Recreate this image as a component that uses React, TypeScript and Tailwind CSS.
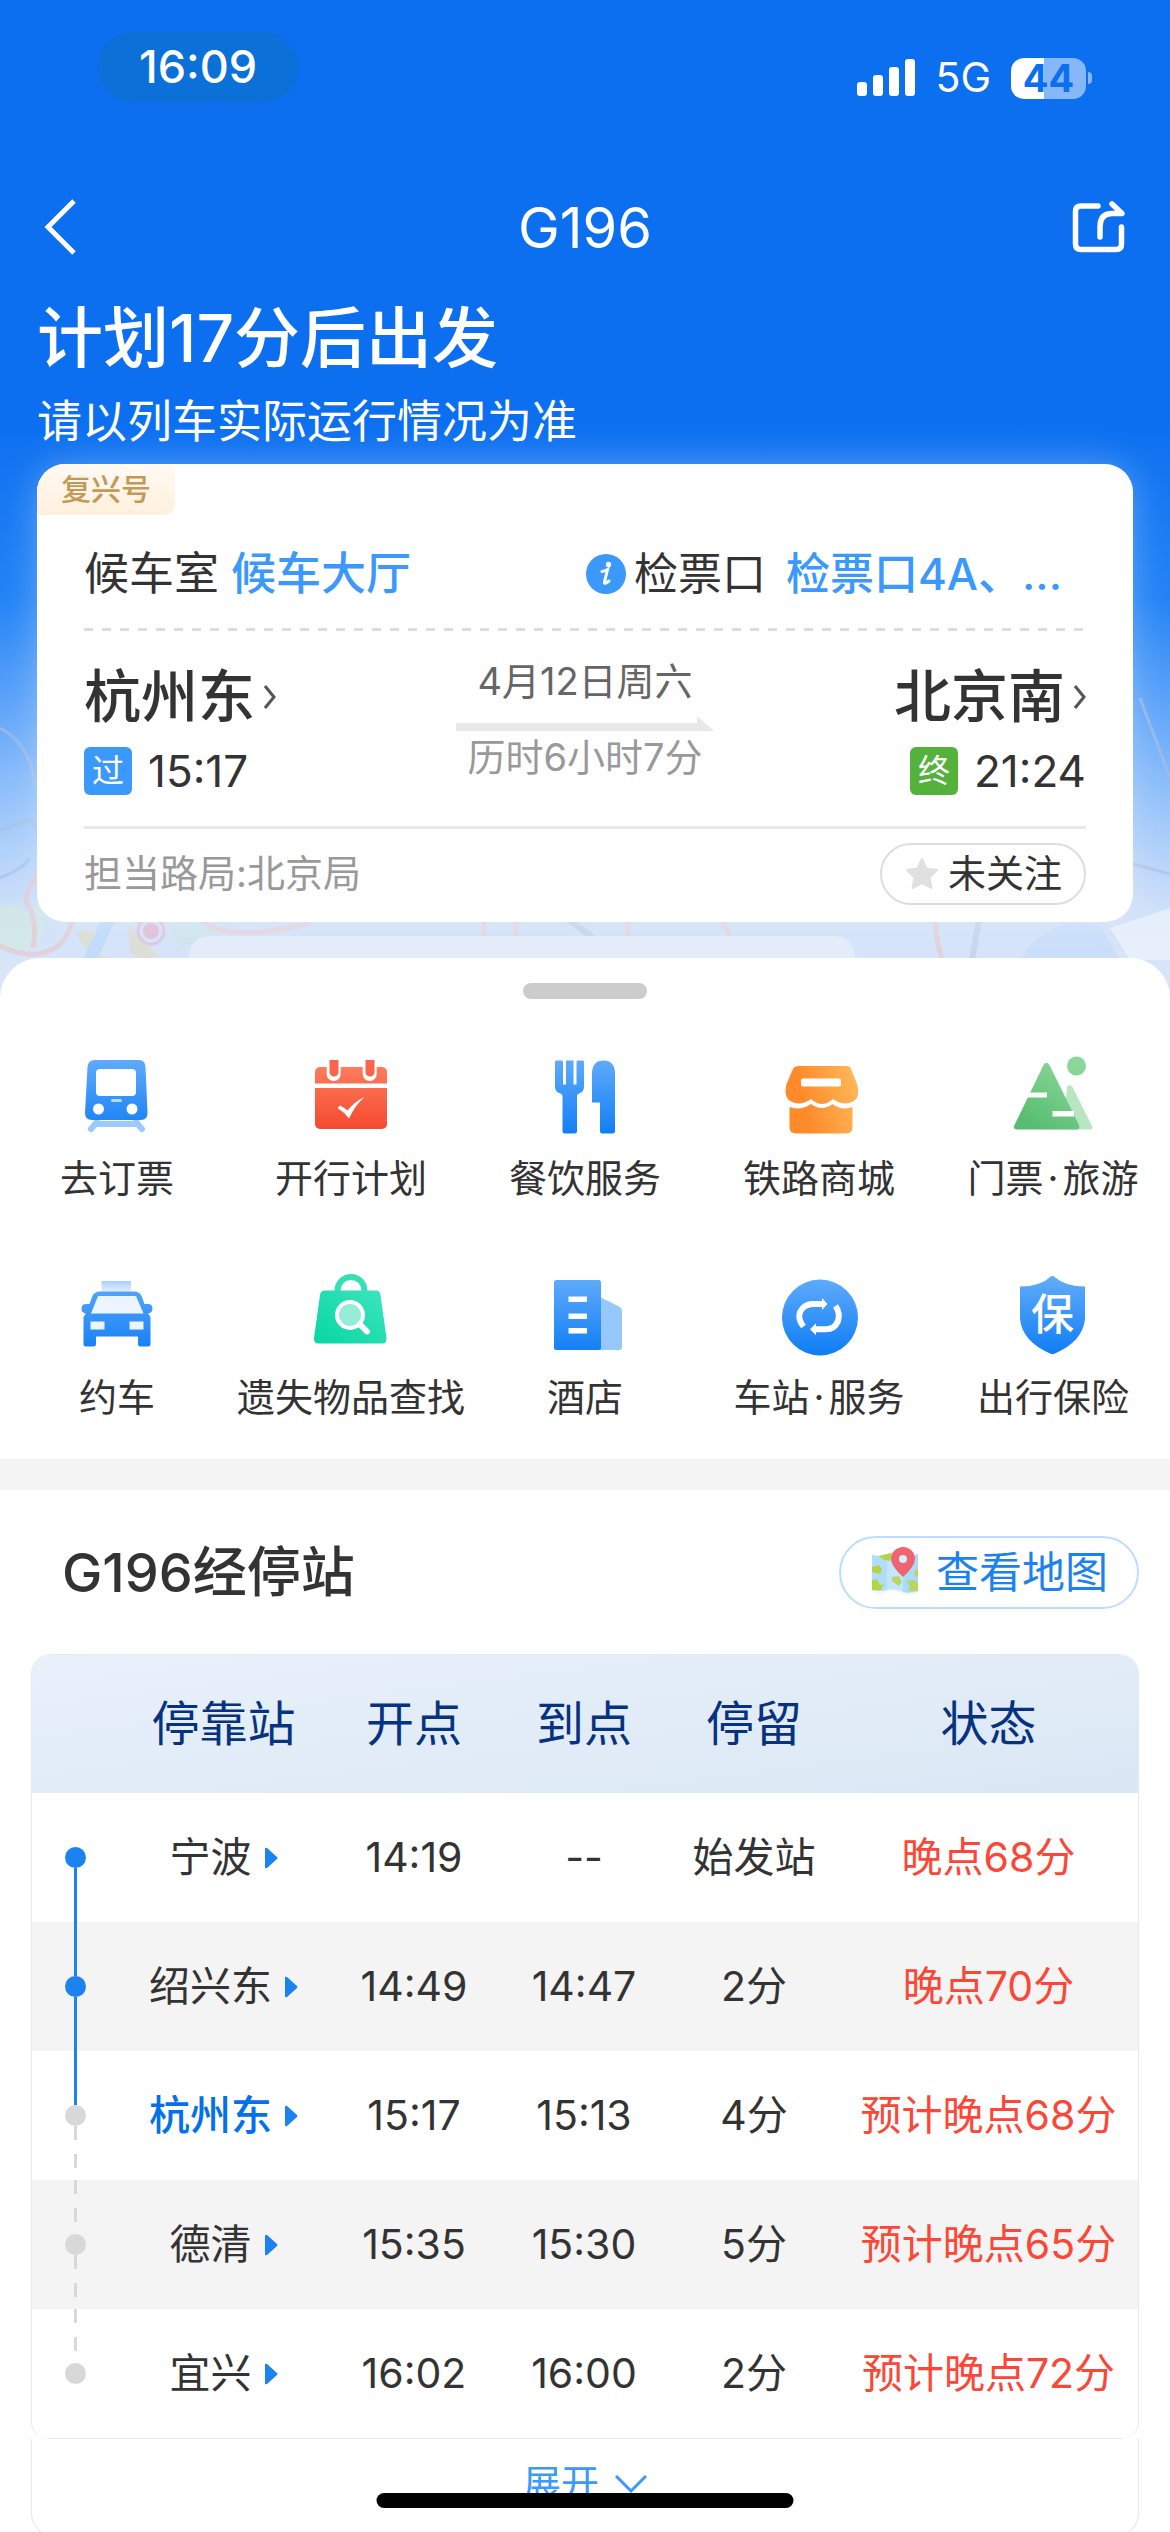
import type { ReactNode } from 'react'

const stops = [
  { name: '宁波', depart: '14:19', arrive: '--', stay: '始发站', status: '晚点68分', passed: true },
  { name: '绍兴东', depart: '14:49', arrive: '14:47', stay: '2分', status: '晚点70分', passed: true },
  { name: '杭州东', depart: '15:17', arrive: '15:13', stay: '4分', status: '预计晚点68分', passed: false, current: true },
  { name: '德清', depart: '15:35', arrive: '15:30', stay: '5分', status: '预计晚点65分', passed: false },
  { name: '宜兴', depart: '16:02', arrive: '16:00', stay: '2分', status: '预计晚点72分', passed: false },
]

const dashed = 'bg-[repeating-linear-gradient(180deg,#d8d8d8_0px_14px,transparent_14px_28px)]'

function Gradients() {
  return (
    <svg className="absolute size-0" aria-hidden="true">
      <defs>
        <linearGradient id="blue" x1="0" y1="0" x2="0" y2="80" gradientUnits="userSpaceOnUse">
          <stop offset="0" stopColor="#63adfb" />
          <stop offset="1" stopColor="#0f7df5" />
        </linearGradient>
        <linearGradient id="red" x1="0" y1="0" x2="0" y2="80" gradientUnits="userSpaceOnUse">
          <stop offset="0" stopColor="#ff8564" />
          <stop offset="1" stopColor="#f4442a" />
        </linearGradient>
        <linearGradient id="orange" x1="10" y1="50" x2="78" y2="34" gradientUnits="userSpaceOnUse">
          <stop offset="0.2" stopColor="#ff8a2a" />
          <stop offset="1" stopColor="#ffb657" />
        </linearGradient>
        <linearGradient id="green" x1="20" y1="70" x2="60" y2="10" gradientUnits="userSpaceOnUse">
          <stop offset="0" stopColor="#57bd70" />
          <stop offset="1" stopColor="#8ad79a" />
        </linearGradient>
        <linearGradient id="teal" x1="16" y1="68" x2="62" y2="10" gradientUnits="userSpaceOnUse">
          <stop offset="0" stopColor="#0bd8a5" />
          <stop offset="1" stopColor="#3ce3bd" />
        </linearGradient>
        <linearGradient id="lamp" x1="0" y1="6" x2="0" y2="17" gradientUnits="userSpaceOnUse">
          <stop offset="0" stopColor="#a9cffd" />
          <stop offset="1" stopColor="#e4f0fe" />
        </linearGradient>
      </defs>
    </svg>
  )
}

function Icon({ children }: { children: ReactNode }) {
  return (
    <svg viewBox="0 0 80 80" className="size-20 overflow-visible" aria-hidden="true">
      {children}
    </svg>
  )
}

const services: { label: string; icon: ReactNode }[] = [
  {
    label: '去订票',
    icon: (
      <Icon>
        <path d="M18 68H61M20 66L14 73M59 66L65 73" stroke="#9ccafc" strokeWidth="6" strokeLinecap="round" fill="none" />
        <path d="M18 4H62Q68 4 68.500 11L70.500 57Q70.500 64 64 64H15Q8 64 8 57L10.500 11Q11 4 18 4Z" fill="url(#blue)" />
        <rect x="19" y="13" width="40" height="27" rx="4" fill="#fff" />
        <rect x="34" y="43" width="11" height="3" rx="1.500" fill="#b9dafd" />
        <circle cx="21.500" cy="53" r="5.500" fill="#fff" />
        <circle cx="55" cy="53" r="5.500" fill="#fff" />
      </Icon>
    ),
  },
  {
    label: '开行计划',
    icon: (
      <Icon>
        <rect x="4" y="11" width="72" height="62" rx="5" fill="url(#red)" />
        <path d="M22.700 4V18M58.700 4V18" stroke="#fff" strokeWidth="14" strokeLinecap="round" />
        <path d="M15 0H31V10.500H15ZM51 0H67V10.500H51Z" fill="#fff" />
        <path d="M18.500 4H27.500V16A4.500 4.500 0 0 1 18.500 16ZM54.500 4H63.500V16A4.500 4.500 0 0 1 54.500 16Z" fill="#f9654a" />
        <rect x="2" y="27.500" width="76" height="4.500" fill="#fff" />
        <path d="M26.500 52L29 49.500Q33 51.500 36.500 54.500Q43 46 53.500 41Q43.500 50 38 62.500Q33 56 26.500 52Z" fill="#fff" />
      </Icon>
    ),
  },
  {
    label: '餐饮服务',
    icon: (
      <Icon>
        <path
          d="M11 4.500H17Q18 4.500 18 6V28.500H21V4.500H28.500V28.500H31.500V6Q31.500 4.500 33 4.500H38Q39 4.500 39 6V31Q39 36 34 37.500Q32 38 32 40V75Q32 77.500 29.500 77.500H20Q17.500 77.500 17.500 75V40Q17.500 38 15.500 37.500Q10 36 10 31V6Q10 4.500 11 4.500Z"
          fill="url(#blue)"
        />
        <path d="M47 16Q48 4.500 58.500 4.500Q69 4.500 70 16V75Q70 77.500 67.500 77.500H57.500Q55 77.500 55 75V46.500H47Z" fill="url(#blue)" />
      </Icon>
    ),
  },
  {
    label: '铁路商城',
    icon: (
      <Icon>
        <path
          d="M20 10H68Q71 10 72 13L78 28Q82 42 73 46Q64 50 54 43Q43 53 32 43Q22 50 13 46Q4 42 7.500 28L14 13Q15 10 20 10Z"
          fill="url(#orange)"
        />
        <path d="M10.500 51Q22 55 32 48Q43 56 53.500 48Q63 55 73.500 51V71Q73.500 77.500 67 77.500H17Q10.500 77.500 10.500 71Z" fill="url(#orange)" />
        <rect x="22" y="22.500" width="40" height="8" rx="2" fill="#fff" />
      </Icon>
    ),
  },
  {
    label: '门票·旅游',
    icon: (
      <Icon>
        <path d="M54 31Q57.500 27 60 32L79 70Q80.500 73.500 76.500 73.500H50Z" fill="#bae5c2" />
        <path d="M30.500 9Q33.500 4.500 36.500 9L66 69Q67.500 73.500 63 73.500H4Q-0.500 73.500 1.500 69Z" fill="url(#green)" />
        <circle cx="63.500" cy="10" r="9.500" fill="url(#green)" />
        <path d="M12 36.500H34V41.500H12ZM39.500 55H61V60.500H39.500Z" fill="#fff" />
      </Icon>
    ),
  },
  {
    label: '约车',
    icon: (
      <Icon>
        <rect x="24.500" y="6" width="29.500" height="11" fill="url(#lamp)" />
        <path
          d="M23 16.500H57Q63 16.500 65 22L67.500 29H71Q75.500 29 75.500 33.500Q75.500 38 71 38.500L73.500 42V69Q73.500 71.500 71 71.500H63.500Q61 71.500 61 69V61.500H19V69Q19 71.500 16.500 71.500H9Q6.500 71.500 6.500 69V42L9 38.500Q4.500 38 4.500 33.500Q4.500 29 9 29H12.500L15 22Q17 16.500 23 16.500Z"
          fill="url(#blue)"
        />
        <path d="M21 21H59L66.500 38.500H14Z" fill="#ebf4ff" />
        <path d="M13.500 46.500H27.500V54.500H13.500ZM52.500 46.500H66.500V54.500H52.500Z" fill="#ebf4ff" />
      </Icon>
    ),
  },
  {
    label: '遗失物品查找',
    icon: (
      <Icon>
        <path d="M26.500 18V15.500A13.500 13.500 0 0 1 53.500 15.500V18" stroke="#35e0b7" strokeWidth="6" fill="none" />
        <path d="M14 15.500H65Q69 15.500 69.500 20L75.500 63Q76 68.500 71 68.500H7.500Q2.500 68.500 3 63L9 20Q9.500 15.500 14 15.500Z" fill="url(#teal)" />
        <circle cx="39" cy="40" r="13" fill="#97ecd8" stroke="#fff" strokeWidth="4" />
        <path d="M49 49.500L56 56.500" stroke="#fff" strokeWidth="6" strokeLinecap="round" />
      </Icon>
    ),
  },
  {
    label: '酒店',
    icon: (
      <Icon>
        <path d="M55 22L75 32Q77 33 77 35.500V72Q77 75 74 75H55Z" fill="#97c8fb" />
        <rect x="9" y="5" width="47" height="70" rx="2.500" fill="url(#blue)" />
        <path d="M23.500 21.500H42V27H23.500ZM23.500 38.500H42V44H23.500ZM23.500 53H42V58.500H23.500Z" fill="#fff" />
      </Icon>
    ),
  },
  {
    label: '车站·服务',
    icon: (
      <Icon>
        <circle cx="41" cy="42.500" r="38" fill="url(#blue)" />
        <path d="M24.500 51.500Q18.500 44 21 37Q25 29 34 29H43" stroke="#fff" strokeWidth="6" fill="none" />
        <path d="M56.500 31Q61.500 38 59 46Q55.500 54.300 47 54.300H37" stroke="#fff" strokeWidth="6" fill="none" />
        <path d="M43 23L48.500 29L43 35ZM37 48.300L31 54.300L37 60.300Z" fill="#fff" />
      </Icon>
    ),
  },
  {
    label: '出行保险',
    icon: (
      <Icon>
        <path d="M38 1.500Q39.500 0 41 1.500Q52 11.500 72 11.500V44Q70 66 42 78.500Q39.500 79.500 37 78.500Q9 66 7 44V11.500Q27 11.500 38 1.500Z" fill="url(#blue)" />
        <text x="39.500" y="55" textAnchor="middle" fontSize="43" fontWeight="500" fill="#fff">
          保
        </text>
      </Icon>
    ),
  },
]

function StatusBar() {
  return (
    <div className="flex h-[134px] items-start justify-between pt-8 pr-[78px] pl-[98px]">
      <span className="flex h-[70px] w-[200px] items-center justify-center rounded-full bg-[#0b70d7] text-[45px] font-medium">
        16:09
      </span>
      <div className="flex h-[92px] items-center gap-5">
        <svg viewBox="0 0 58 38" className="h-[38px] w-[58px]" aria-hidden="true">
          <rect x="0" y="23" width="10" height="14" rx="3" fill="#fff" />
          <rect x="16" y="16" width="10" height="21" rx="3" fill="#fff" />
          <rect x="32" y="8" width="10" height="29" rx="3" fill="#fff" />
          <rect x="48" y="0" width="10" height="37" rx="3" fill="#fff" />
        </svg>
        <span className="text-[41px]">5G</span>
        <span className="flex items-center gap-[2px]">
          <span className="flex h-[41px] w-[75px] items-center justify-center rounded-[13px] bg-linear-to-r from-white from-44% to-[#86b7f8] to-44% text-[38px] leading-none font-bold text-[#0c6ff0]">
            44
          </span>
          <span className="h-3 w-1 rounded-r-full bg-[#86b7f8]" />
        </span>
      </div>
    </div>
  )
}

function NavBar() {
  return (
    <div className="flex h-[186px] items-start justify-between px-11 pt-[60px]">
      <button aria-label="返回" className="h-[66px] w-[54px]">
        <svg viewBox="0 0 54 66" className="h-full w-full" fill="none" stroke="#fff" strokeWidth="5">
          <path d="M30 7L4 33L30 59" />
        </svg>
      </button>
      <h1 className="text-[56px] leading-[68px]">G196</h1>
      <button aria-label="分享" className="h-[66px] w-[54px]">
        <svg
          viewBox="0 0 54 66"
          className="h-full w-full"
          fill="none"
          stroke="#fff"
          strokeWidth="5.500"
          strokeLinecap="round"
          strokeLinejoin="round"
        >
          <path d="M26 12H9Q3.500 12 3.500 17.500V50Q3.500 55.500 9 55.500H44Q49.500 55.500 49.500 50V33" />
          <path d="M28 43V33Q28 19.500 40 19.500H50L40 10" />
        </svg>
      </button>
    </div>
  )
}

// faint street map that shows through under the blue header
function MapBackdrop() {
  return (
    <svg
      viewBox="0 0 1170 300"
      preserveAspectRatio="xMidYMax slice"
      className="absolute inset-x-0 bottom-0 h-[300px] w-full opacity-60"
      fill="none"
      aria-hidden="true"
    >
      <path d="M0 212Q14 200 26 214L40 204L46 226L36 250L0 254Z" fill="#d3ecdd" />
      <path d="M165 215L220 210L216 236L180 250Z" fill="#cfe6e6" />
      <path d="M76 234L92 232L106 242L100 256L114 262H96L84 248ZM128 226L140 240L160 258L142 262L130 254Z" fill="#e2dcc0" />
      <path d="M90 262L112 214" stroke="#b6d6fc" strokeWidth="13" />
      <path d="M0 30Q30 45 36 90M0 132L30 122L60 150M0 180Q24 170 30 160" stroke="#a9bfe4" strokeWidth="3" />
      <path d="M0 248Q30 262 50 252Q66 248 74 218M33 250Q38 220 27 206Q22 186 60 160" stroke="#eac6cb" strokeWidth="5" />
      <path d="M190 210Q215 250 310 225M484 215V240M516 215V240M628 215V240M715 210L730 238" stroke="#eccdd2" strokeWidth="5" />
      <path d="M560 215L600 245M980 215L972 262" stroke="#c3cce6" strokeWidth="6" />
      <path d="M935 215Q935 240 942 262" stroke="#eac8c4" strokeWidth="5" />
      <path d="M1020 262Q1050 215 1100 228L1120 262Z" fill="#c4dbfb" />
      <path d="M1110 230L1170 210V262H1130Z" fill="#f3f7fd" />
      <path d="M1140 0L1170 80M1130 165L1170 176" stroke="#a9bfe4" strokeWidth="3" />
      <circle cx="151" cy="233" r="13" stroke="#e8b4cb" strokeWidth="3" />
      <circle cx="151" cy="233" r="8" fill="#e6a9c3" />
    </svg>
  )
}

function StationArrow() {
  return (
    <svg viewBox="0 0 12 24" className="h-6 w-3" fill="none" stroke="#555" strokeWidth="3" aria-hidden="true">
      <path d="M1 1L10 12L1 23" />
    </svg>
  )
}

function TripCard() {
  return (
    <section className="mx-[37px] rounded-[28px] bg-white px-[47px] text-[#333] shadow-[0_0_36px_rgba(255,255,255,0.3)]">
      <div className="-ml-[47px] flex h-[51px] w-[138px] items-center justify-center rounded-tl-[28px] rounded-br-[10px] bg-linear-to-b from-[#fffaf5] to-[#fff0dc] text-[30px] font-medium text-[#c39a55]">
        复兴号
      </div>
      <div className="flex h-[113px] items-center justify-between pt-1 text-[45px]">
        <p>
          候车室
          <button className="ml-3 font-medium text-[#3b99fc]">候车大厅</button>
        </p>
        <p className="flex items-center pr-6 text-[44px]">
          <svg viewBox="0 0 40 40" className="mr-2 size-10" aria-hidden="true">
            <circle cx="20" cy="20" r="20" fill="#3b99fc" />
            <circle cx="22.500" cy="10.500" r="2.700" fill="#fff" />
            <path d="M16 17.500Q19 17 21.500 15.500L18.500 28Q18 31 23 27" stroke="#fff" strokeWidth="3" fill="none" strokeLinecap="round" />
          </svg>
          检票口
          <button className="ml-5 font-medium text-[#3b99fc]">检票口4A、...</button>
        </p>
      </div>
      <div className="h-[3px] bg-[repeating-linear-gradient(90deg,#ddd_0px_9px,transparent_9px_18px)]" />
      <div className="flex h-[195px] items-start justify-between">
        <div className="pt-6">
          <button className="flex items-center gap-[9px] text-[57px] leading-[84px] font-medium">
            杭州东
            <StationArrow />
          </button>
          <p className="mt-2 flex h-12 items-center gap-4 text-[44px]">
            <span className="flex size-12 items-center justify-center rounded-[6px] bg-[#3b99fc] text-[32px] text-white">过</span>
            15:17
          </p>
        </div>
        <div className="flex w-[258px] flex-col items-center pt-6 text-[38px] leading-[52px]">
          <p className="whitespace-nowrap text-[#666]">4月12日周六</p>
          <svg viewBox="0 0 258 16" className="mt-2 h-4 w-full" aria-hidden="true">
            <path d="M0 8H241V1L258 16H0Z" fill="#e8e8e8" />
          </svg>
          <p className="whitespace-nowrap text-[#999]">历时6小时7分</p>
        </div>
        <div className="flex flex-col items-end pt-6">
          <button className="flex items-center gap-[9px] text-[57px] leading-[84px] font-medium">
            北京南
            <StationArrow />
          </button>
          <p className="mt-2 flex h-12 items-center gap-4 text-[44px]">
            <span className="flex size-12 items-center justify-center rounded-[6px] bg-[#54b13c] text-[32px] text-white">终</span>
            21:24
          </p>
        </div>
      </div>
      <div className="flex h-24 items-center justify-between border-t-[3px] border-[#e8e8e8] pb-1 text-[38px]">
        <p className="text-[#999]">担当路局:北京局</p>
        <button className="flex h-[62px] w-[206px] items-center justify-center gap-2 rounded-full border-2 border-[#ddd]">
          <svg viewBox="0 0 36 36" className="size-9" aria-hidden="true">
            <path
              d="M18 3L22.500 12.500L33 14L25.500 21.500L27.500 32L18 27L8.500 32L10.500 21.500L3 14L13.500 12.500Z"
              fill="#e0e0e0"
              stroke="#e0e0e0"
              strokeWidth="2"
              strokeLinejoin="round"
            />
          </svg>
          未关注
        </button>
      </div>
    </section>
  )
}

function Services() {
  return (
    <nav className="grid grid-cols-5 gap-y-[72px] pt-[57px] pb-[37px]">
      {services.map((service) => (
        <a key={service.label} href="#" className="flex flex-col items-center gap-[17px] text-[38px] leading-[50px] whitespace-nowrap">
          {service.icon}
          <span>
            {service.label.split('·').map((part, i) => (
              <span key={part}>
                {i > 0 && <span className="mx-1">·</span>}
                {part}
              </span>
            ))}
          </span>
        </a>
      ))}
    </nav>
  )
}

function MapIcon() {
  return (
    <svg viewBox="0 0 50 50" className="size-[50px]" aria-hidden="true">
      <path d="M2 8Q10 11 17 7Q26 3 33 8Q41 11 48 7V46Q40 50 33 47Q25 42 17 45Q10 48 2 45Z" fill="#f3f6f8" />
      <path d="M2 8Q10 10 17 7V43Q9 45 2 43Z" fill="#b0ddfb" />
      <path d="M17 7Q26 4 33 8V45Q25 41 17 43Z" fill="#c2e6fd" />
      <path d="M33 8Q41 10 48 7V44Q40 47 33 45Z" fill="#abd9fa" />
      <path d="M9 9L17 7L22 6L20 14L14 13ZM2 20L9 18L12 23L10 27L2 25ZM2 33L7 32L10 38L14 37L11 43L2 43Z" fill="#b3d443" />
      <path d="M22 30L29 29L32 35L29 39L22 34ZM45 24L48 20V30L44 28ZM36 34L44 33L48 36V44L38 44L40 39Z" fill="#b9d65e" />
      <path d="M33 30Q21 19 21 12A12 12 0 0 1 45 12Q45 19 33 30Z" fill="#ee6470" />
      <circle cx="33" cy="12" r="4" fill="#d9eefc" />
    </svg>
  )
}

function StopTable() {
  return (
    <table className="w-full table-fixed text-center text-[41px]">
      <colgroup>
        <col className="w-[86px]" />
        <col className="w-[211px]" />
        <col className="w-[170px]" />
        <col className="w-[170px]" />
        <col className="w-[170px]" />
        <col />
      </colgroup>
      <thead>
        <tr className="h-[138px] bg-linear-to-br from-[#e9f1fb] to-[#dae7f4] text-[48px] text-[#06327f]">
          <td />
          <th className="p-0 font-normal">停靠站</th>
          <th className="p-0 font-normal">开点</th>
          <th className="p-0 font-normal">到点</th>
          <th className="p-0 font-normal">停留</th>
          <th className="p-0 font-normal">状态</th>
        </tr>
      </thead>
      <tbody>
        {stops.map((stop, i) => {
          const before = i === 0 ? '' : stops[i - 1].passed ? 'bg-[#1c82f0]' : dashed
          const after = i === stops.length - 1 ? '' : stop.passed ? 'bg-[#1c82f0]' : dashed
          return (
            <tr key={stop.name} className="h-[129px] even:bg-[#f4f4f4]">
              <td className="p-0">
                <div className="flex h-[129px] flex-col items-center">
                  <span className={`w-[3px] flex-1 ${before}`} />
                  <span className={`size-[21px] rounded-full ${stop.passed ? 'bg-[#1c82f0]' : 'bg-[#d8d8d8]'}`} />
                  <span className={`w-[3px] flex-1 ${after}`} />
                </div>
              </td>
              <td className="p-0">
                <button className={`inline-flex items-center gap-3 ${stop.current ? 'font-medium text-[#0470ea]' : ''}`}>
                  {stop.name}
                  <svg viewBox="0 0 14 22" className="h-[22px] w-[14px]" aria-hidden="true">
                    <path d="M1 2Q1 0 3 1L13 10Q14 11 13 12L3 21Q1 22 1 20Z" fill="#1c82f0" />
                  </svg>
                </button>
              </td>
              <td className="p-0">{stop.depart}</td>
              <td className="p-0">{stop.arrive}</td>
              <td className="p-0">{stop.stay}</td>
              <td className="p-0 whitespace-nowrap text-[#fb4737]">{stop.status}</td>
            </tr>
          )
        })}
      </tbody>
    </table>
  )
}

function App() {
  return (
    <div className="relative h-screen overflow-hidden bg-[#dce8f9] font-['Inter','Noto_Sans_CJK_SC',sans-serif] text-[#333]">
      <Gradients />
      <header className="relative bg-[linear-gradient(180deg,#0c6ff0_0%,#0c6ff0_42%,#2383f6_60%,#5ba2f9_70%,#9fc8fa_82%,#cfe0f9_91%,#dce8f9_100%)] pb-[76px] text-white">
        <MapBackdrop />
        <div className="relative">
          <StatusBar />
          <NavBar />
          <div className="-mt-6 px-[37px]">
            <h2 className="text-[66px] leading-[84px] font-medium">计划17分后出发</h2>
            <p className="text-[45px] leading-[84px]">请以列车实际运行情况为准</p>
          </div>
          <TripCard />
        </div>
        <div className="absolute bottom-0 left-[189px] h-[62px] w-[666px] rounded-t-[20px] bg-[#e3edfa]" />
      </header>

      <main className="relative -mt-10 rounded-t-[40px] bg-white">
        <div className="flex justify-center pt-[25px]">
          <span className="h-4 w-[124px] rounded-full bg-[#ccc]" />
        </div>
        <Services />
        <div className="h-[31px] bg-[#f4f4f4]" />
        <div className="flex h-[164px] items-center justify-between pr-[31px] pl-[62px]">
          <h2 className="text-[54px] font-medium">G196经停站</h2>
          <button className="flex h-[73px] w-[300px] items-center justify-center gap-4 rounded-full border-2 border-[#bddcff] text-[43px] text-[#1c82f0]">
            <MapIcon />
            查看地图
          </button>
        </div>
        <div className="mx-[31px]">
          <div className="overflow-hidden rounded-t-[20px] rounded-b-[16px] border border-b-0 border-[#e8e8e8]">
            <StopTable />
          </div>
          <div className="mx-4 h-px bg-[#e8e8e8]" />
          <div className="flex h-[98px] items-center justify-center rounded-b-[24px] border border-t-0 border-[#e8e8e8] pb-2">
            <button className="flex items-center gap-4 text-[38px] text-[#3b99fc]">
              展开
              <svg viewBox="0 0 32 18" className="h-[18px] w-8" fill="none" stroke="#3b99fc" strokeWidth="3" aria-hidden="true">
                <path d="M1 1L16 16L31 1" />
              </svg>
            </button>
          </div>
        </div>
      </main>

      <div className="absolute bottom-6 left-1/2 h-[15px] w-[417px] -translate-x-1/2 rounded-full bg-black" />
    </div>
  )
}

export default App
